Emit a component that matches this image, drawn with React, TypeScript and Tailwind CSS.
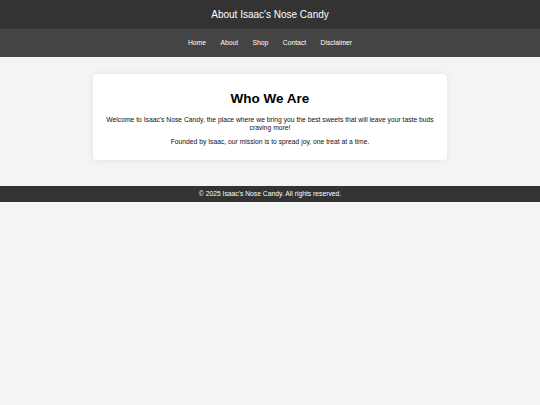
export default function App() {
  const links = ['Home', 'About', 'Shop', 'Contact', 'Disclaimer'];

  return (
    <div className="min-h-[405px] bg-[#f4f4f4] font-['Liberation_Sans',Arial,sans-serif]">
      <header className="bg-[#333333] text-white text-center py-[8px]">
        <h1 className="text-[10px] leading-[13px] font-normal">About Isaac's Nose Candy</h1>
      </header>

      <nav className="bg-[#444444] py-[10px]">
        <ul className="flex justify-center gap-[14.5px] text-[6.75px] leading-[8px] text-white">
          {links.map((link) => (
            <li key={link}>
              <a href="#">{link}</a>
            </li>
          ))}
        </ul>
      </nav>

      <main className="pt-[17px] pb-[26px]">
        <section className="w-[354px] mx-auto bg-white rounded-[4px] shadow-[0_0_6px_rgba(0,0,0,0.08)] text-center pt-[17px] pb-[14px] px-[10px]">
          <h2 className="text-[13.5px] leading-[15px] font-bold text-black mb-[10px]">Who We Are</h2>
          <p className="text-[6.75px] leading-[8px] text-[#111] mb-[6px]">
            Welcome to Isaac's Nose Candy, the place where we bring you the best sweets that will leave your taste buds craving more!
          </p>
          <p className="text-[6.75px] leading-[8px] text-[#111]">
            Founded by Isaac, our mission is to spread joy, one treat at a time.
          </p>
        </section>
      </main>

      <footer className="bg-[#333333] text-white text-center py-[4px] text-[6.75px] leading-[8px]">
        © 2025 Isaac's Nose Candy. All rights reserved.
      </footer>
    </div>
  );
}
